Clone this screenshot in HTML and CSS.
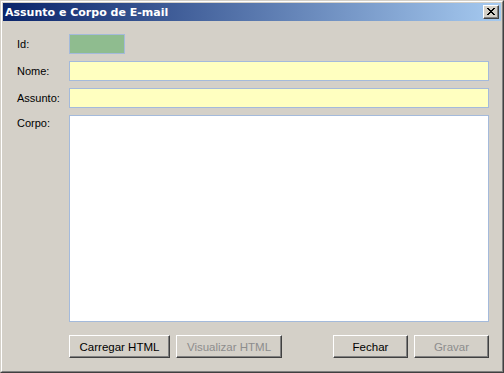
FILE: index.html
```html
<!DOCTYPE html>
<html lang="pt">
<head>
    <meta charset="UTF-8">
    <meta name="viewport" content="width=device-width, initial-scale=1.0">
    <title>Assunto e Corpo de E-mail</title>
    <link rel="stylesheet" href="styles.css">
</head>
<body>
    <div class="window">
        <div class="frame">
            <!-- barra de título -->
            <div class="titlebar">
                <span class="title">Assunto e Corpo de E-mail</span>
                <button class="close" type="button" aria-label="Fechar">
                    <svg width="8" height="7" viewBox="0 0 8 7">
                        <path d="M0 0h2v1h-2zM6 0h2v1h-2zM1 1h2v1h-2zM5 1h2v1h-2zM2 2h4v1h-4zM3 3h2v1h-2zM2 4h4v1h-4zM1 5h2v1h-2zM5 5h2v1h-2zM0 6h2v1h-2zM6 6h2v1h-2z" fill="#000"/>
                    </svg>
                </button>
            </div>

            <div class="content">
                <div class="form">
                    <label class="label">Id:</label>
                    <div class="field id-field"></div>

                    <label class="label">Nome:</label>
                    <input class="field text-field" type="text">

                    <label class="label">Assunto:</label>
                    <input class="field text-field" type="text">

                    <label class="label label-top">Corpo:</label>
                    <textarea class="field body-field"></textarea>
                </div>

                <div class="actions">
                    <div class="group">
                        <button class="btn btn-wide" type="button">Carregar HTML</button>
                        <button class="btn btn-wider" type="button" disabled>Visualizar HTML</button>
                    </div>
                    <div class="group">
                        <button class="btn" type="button">Fechar</button>
                        <button class="btn" type="button" disabled>Gravar</button>
                    </div>
                </div>
            </div>
        </div>
    </div>
</body>
</html>
```

FILE: styles.css
```css
body {
    margin: 0;
    padding: 0;
    background-color: #d4d0c8;
    font-family: "Liberation Sans", Arial, sans-serif;
    font-size: 11px;
    color: #000;
}

/* moldura 3D da janela */
.window {
    width: 504px;
    height: 373px;
    box-sizing: border-box;
    border: 1px solid;
    border-color: #d4d0c8 #404040 #404040 #d4d0c8;
}

.frame {
    height: 100%;
    box-sizing: border-box;
    border: 1px solid;
    border-color: #fff #808080 #808080 #fff;
    padding: 1px;
    display: flex;
    flex-direction: column;
}

.titlebar {
    height: 18px;
    display: flex;
    align-items: center;
    justify-content: space-between;
    padding: 0 2px 0 2px;
    background: linear-gradient(to right, #0a246a, #a6caf0);
}

.title {
    color: #fff;
    font-family: "DejaVu Sans", Verdana, sans-serif;
    font-weight: bold;
    font-size: 11px;
}

.close {
    width: 16px;
    height: 14px;
    padding: 0;
    display: flex;
    align-items: center;
    justify-content: center;
    background-color: #d4d0c8;
    border: 1px solid;
    border-color: #fff #404040 #404040 #fff;
    box-shadow: inset -1px -1px #808080;
}

.close svg {
    display: block;
    margin: 0 1px 1px 0;
}

.content {
    flex: 1;
    padding: 13px 12px 0 14px;
}

.form {
    display: grid;
    grid-template-columns: 52px 420px;
    grid-template-rows: 20px 20px 20px 207px;
    row-gap: 7px;
    align-items: center;
}

.label {
    line-height: 20px;
}

.label-top {
    align-self: start;
    line-height: 14px;
    padding-top: 1px;
}

.field {
    box-sizing: border-box;
    height: 100%;
    margin: 0;
    border: 1px solid #a4badb;
    font-family: inherit;
    font-size: 11px;
    outline: none;
}

.id-field {
    width: 56px;
    background-color: #8fbc8f;
}

.text-field {
    background-color: #ffffc0;
}

.body-field {
    background-color: #fff;
    resize: none;
}

/* botões de baixo */
.actions {
    display: flex;
    justify-content: space-between;
    margin-top: 13px;
    padding-left: 52px;
}

.group {
    display: flex;
    gap: 6px;
}

.btn {
    width: 75px;
    height: 23px;
    padding: 0;
    background-color: #d4d0c8;
    border: 1px solid;
    border-color: #fff #404040 #404040 #fff;
    box-shadow: inset -1px -1px #808080;
    font-family: inherit;
    font-size: 11.5px;
    color: #000;
}

.btn-wide {
    width: 101px;
}

.btn-wider {
    width: 106px;
}

.btn:disabled {
    color: #8d8d8d;
}
```
